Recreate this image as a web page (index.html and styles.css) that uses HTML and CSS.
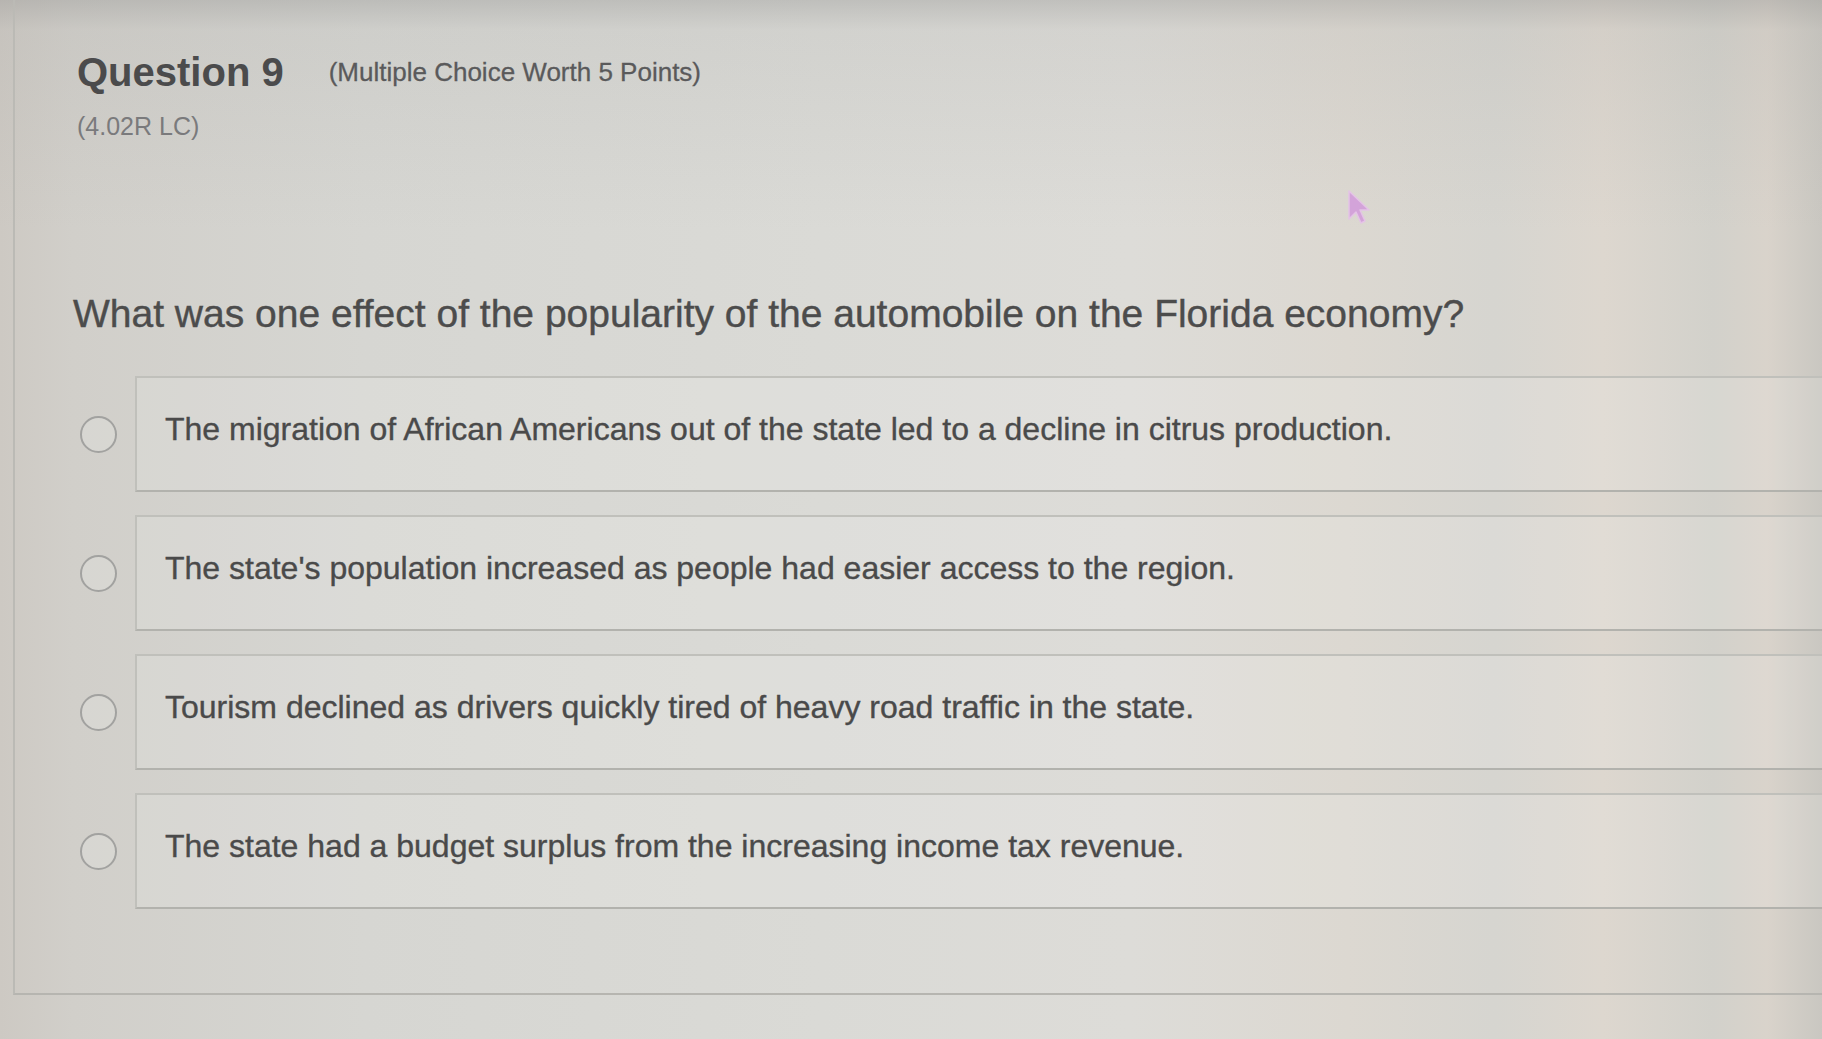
FILE: index.html
```html
<!DOCTYPE html>
<html lang="en">
<head>
<meta charset="utf-8">
<title>Question 9</title>
<link rel="stylesheet" href="styles.css">
</head>
<body>
<div class="frame">
  <div class="header">
    <h1 class="title">Question 9</h1>
    <span class="subtitle">(Multiple Choice Worth 5 Points)</span>
  </div>
  <div class="code">(4.02R LC)</div>
  <p class="prompt">What was one effect of the popularity of the automobile on the Florida economy?</p>
  <div class="options">
    <label class="option">
      <span class="radio"></span>
      <span class="box">The migration of African Americans out of the state led to a decline in citrus production.</span>
    </label>
    <label class="option">
      <span class="radio"></span>
      <span class="box">The state's population increased as people had easier access to the region.</span>
    </label>
    <label class="option">
      <span class="radio"></span>
      <span class="box">Tourism declined as drivers quickly tired of heavy road traffic in the state.</span>
    </label>
    <label class="option">
      <span class="radio"></span>
      <span class="box">The state had a budget surplus from the increasing income tax revenue.</span>
    </label>
  </div>
</div>
<svg class="cursor" width="26" height="36" viewBox="0 0 26 36" aria-hidden="true">
  <path d="M3 2 L3 30 L10 23 L15 34 L19 32 L14 21 L23 21 Z" fill="#d3a3d9" stroke="#e4c3e6" stroke-width="1.5" stroke-linejoin="round"/>
</svg>
</body>
</html>
```
FILE: styles.css
```css
html, body {
  margin: 0;
  padding: 0;
  height: 100%;
}

body {
  position: relative;
  overflow: hidden;
  font-family: "Liberation Sans", Arial, Helvetica, sans-serif;
  color: #4a4a4a;
  background:
    linear-gradient(180deg, rgba(150, 150, 148, 0.4) 0, rgba(160, 160, 158, 0.14) 30px, rgba(160, 160, 158, 0) 230px),
    linear-gradient(90deg, #cdc9c3 0, #d1cfca 4%, #d6d6d2 20%, #dadad6 45%, #dddcd8 62%, #dcd8d1 74%, #d6d5d0 82%, #ddd7cf 88%, #d2d1cb 94%, #d9d3cb 97%, #c9c7c1 100%);
}

.frame {
  margin-left: 13px;
  height: 995px;
  box-sizing: border-box;
  border-left: 2px solid #bbbab5;
  border-bottom: 2px solid #b6b5b0;
  padding: 49px 0 0 62px;
}

.header {
  display: flex;
  align-items: center;
  gap: 45px;
  height: 46px;
}

.title {
  margin: 0;
  font-size: 40px;
  line-height: 46px;
  font-weight: 700;
  color: #4b4b4c;
}

.subtitle {
  font-size: 26px;
  line-height: 29px;
  color: #5a5a5b;
  -webkit-text-stroke: 0.3px #5a5a5b;
}

.code {
  margin-top: 17px;
  font-size: 25px;
  line-height: 29px;
  color: #7a7a7c;
}

.prompt {
  margin: 150px 0 0 -4px;
  font-size: 39px;
  line-height: 45px;
  color: #4c4c4c;
  -webkit-text-stroke: 0.4px #4c4c4c;
}

.options {
  margin-top: 40px;
  display: flex;
  flex-direction: column;
  gap: 23px;
}

.option {
  display: flex;
  align-items: flex-start;
  gap: 18px;
}

.radio {
  flex: none;
  width: 33px;
  height: 33px;
  margin: 40px 0 0 3px;
  border: 2.5px solid #a2a2a0;
  border-radius: 50%;
  background: rgba(255, 255, 255, 0.15);
}

.box {
  flex: 1;
  height: 116px;
  box-sizing: border-box;
  padding: 33px 0 0 28px;
  border: 2px solid #c0c0bb;
  border-bottom-color: #b2b2ad;
  border-right: none;
  background: rgba(255, 255, 255, 0.13);
  font-size: 32px;
  line-height: 37px;
  color: #4a4a4a;
  -webkit-text-stroke: 0.35px #4a4a4a;
}

.cursor {
  position: absolute;
  left: 1346px;
  top: 189px;
}
```
